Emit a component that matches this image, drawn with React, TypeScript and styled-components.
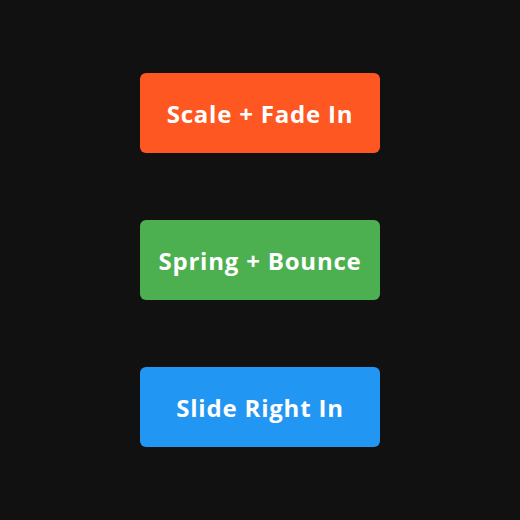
import React from "react";
import styled, {createGlobalStyle} from "styled-components";

const GlobalStyle = createGlobalStyle`
  html, body {
    margin: 0;
    padding: 0;
    background: #111111;
  }
`

const Stage = styled.div`
  min-height: 100vh;
  display: flex;
  flex-direction: column;
  align-items: center;
  justify-content: center;
  gap: 67px;
`

const Button = styled.button<{ $color: string }>`
  width: 240px;
  height: 80px;
  padding: 0;
  border: none;
  border-radius: 6px;
  background-color: ${p => p.$color};
  color: #ffffff;
  font-family: "Open Sans", "Liberation Sans", sans-serif;
  font-weight: 700;
  font-size: 24px;
  letter-spacing: 0.8px;
  cursor: pointer;
`

const buttons = [
    {label: 'Scale + Fade In', color: '#ff5722'},
    {label: 'Spring + Bounce', color: '#4caf50'},
    {label: 'Slide Right In', color: '#2196f3'},
]

function App() {
    return (
        <>
            <GlobalStyle/>
            <Stage>
                {buttons.map(b => (
                    <Button key={b.label} $color={b.color}>{b.label}</Button>
                ))}
            </Stage>
        </>
    )
}

export default App
